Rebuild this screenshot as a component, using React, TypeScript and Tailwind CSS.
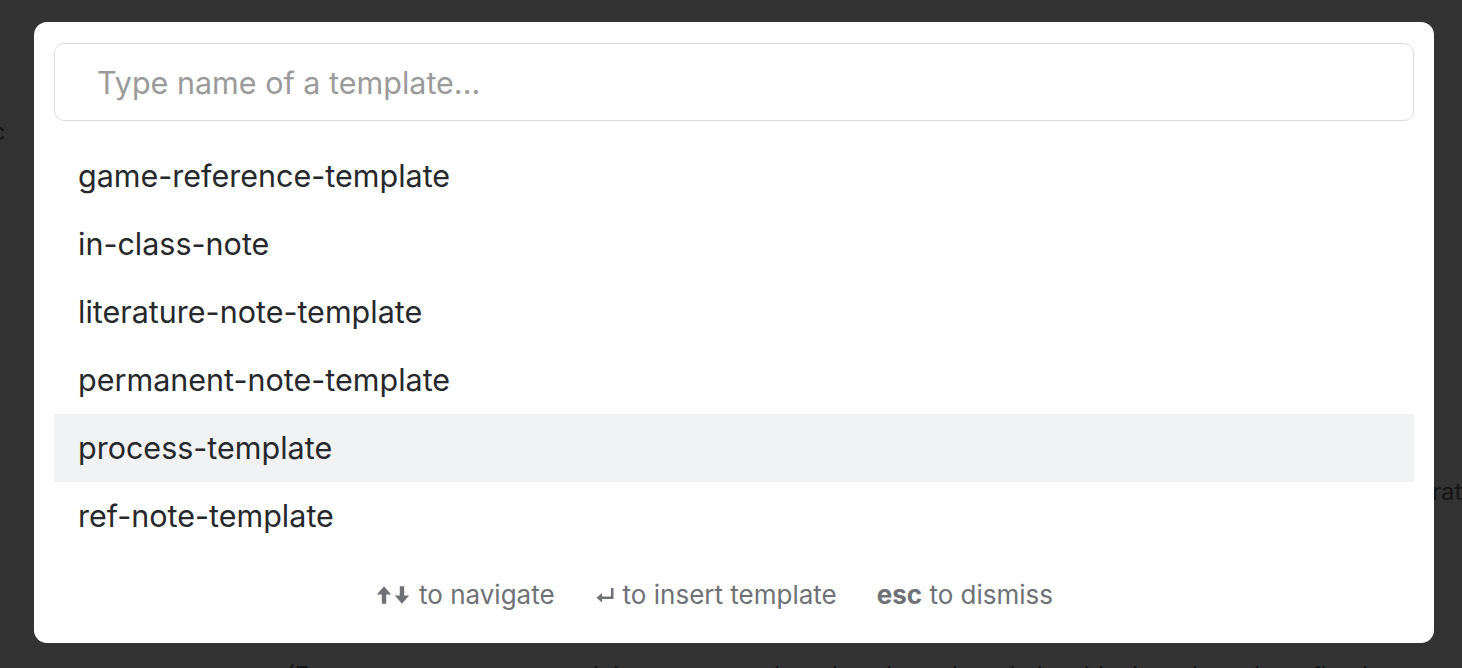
const templates = [
  'game-reference-template',
  'in-class-note',
  'literature-note-template',
  'permanent-note-template',
  'process-template',
  'ref-note-template',
]

export default function App() {
  const active = 4

  return (
    <div className="relative h-[668px] w-[1462px] overflow-hidden bg-[#333333] font-['Inter','Noto_Sans',sans-serif]">
      {/* dimmed page behind the modal */}
      <div className="absolute inset-0 text-[24px] text-[#151515]">
        <div className="absolute left-[-14px] top-[114px]">ic</div>
        <div className="absolute left-[1432px] top-[474px] whitespace-nowrap">ration</div>
        <div className="absolute left-[286px] top-[658px] whitespace-nowrap">
          (For a concrete note, containing your own thoughts about the relationship, introduce the reflection
        </div>
      </div>

      {/* template picker */}
      <div className="absolute inset-0 pl-[34px] pt-[22px]">
        <div className="w-[1400px] rounded-[13px] bg-white px-5 pb-[32px] pt-[21px]">
          <input
            placeholder="Type name of a template..."
            className="h-[78px] w-full rounded-[10px] border border-[#dcdcdc] px-[42px] text-[30.5px] text-[#222] placeholder-[#9a9a9a] outline-none"
          />

          <ul className="mt-[21px]">
            {templates.map((name, i) => (
              <li
                key={name}
                className={`flex h-[68px] items-center pl-6 text-[30.5px] text-[#26282b] ${i === active ? 'bg-[#f1f2f4]' : ''}`}
              >
                {name}
              </li>
            ))}
          </ul>

          <div className="flex justify-center pt-[29px] text-[26px] leading-8 text-[#6e7176]">
            <span className="mr-10 flex items-center gap-2">
              <span className="flex items-center">
                <svg width="18" height="22" viewBox="0 0 16 20" fill="currentColor">
                  <path d="M8 2 L14.5 9.5 H10 V18 H6 V9.5 H1.5 Z" />
                </svg>
                <svg width="18" height="22" viewBox="0 0 16 20" fill="currentColor">
                  <path d="M8 18 L14.5 10.5 H10 V2 H6 V10.5 H1.5 Z" />
                </svg>
              </span>
              to navigate
            </span>
            <span className="mr-10 flex items-center gap-2">
              <svg width="20" height="20" viewBox="0 0 20 20" fill="currentColor">
                <path d="M16 3 H18.5 V14 H7 V17.5 L1.5 12.75 L7 8 V11.5 H16 Z" />
              </svg>
              to insert template
            </span>
            <span className="mr-10">
              <b className="font-bold">esc</b> to dismiss
            </span>
          </div>
        </div>
      </div>
    </div>
  )
}
